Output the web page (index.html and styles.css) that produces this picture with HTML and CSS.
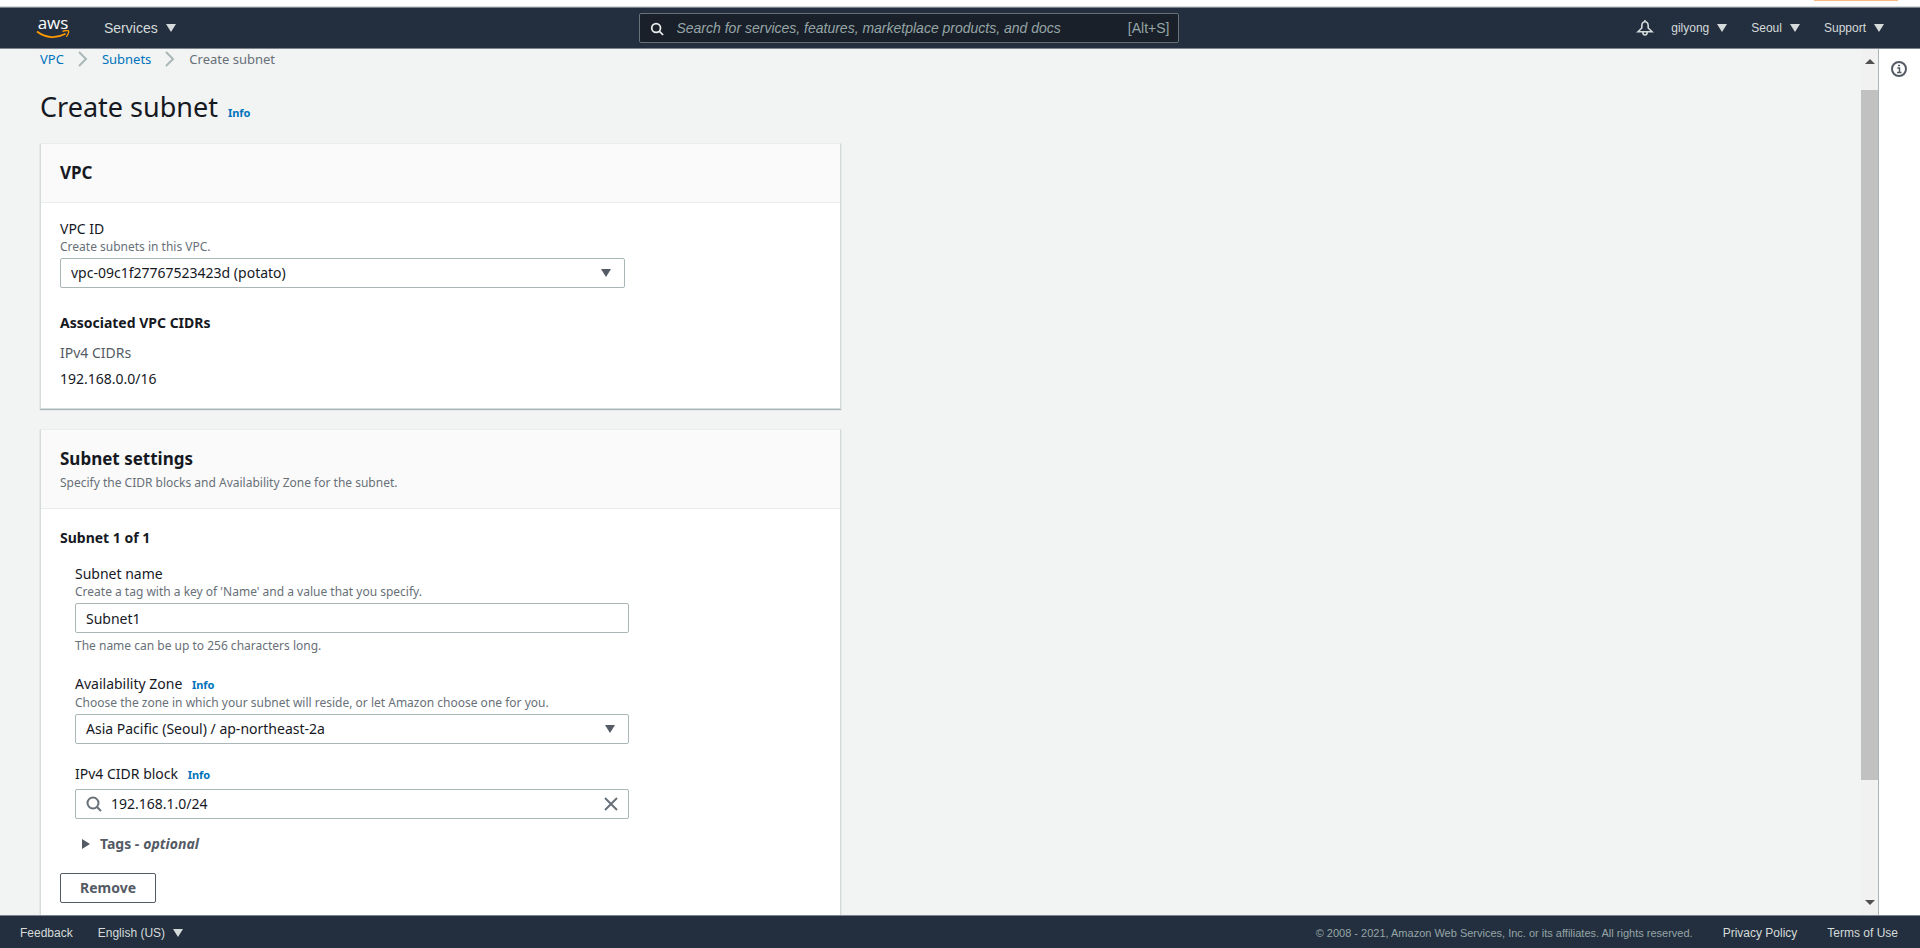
FILE: index.html
```html
<!DOCTYPE html>
<html lang="en">
<head>
    <meta charset="UTF-8">
    <meta name="viewport" content="width=device-width, initial-scale=1.0">
    <title>Create subnet | VPC</title>
    <link rel="stylesheet" href="styles.css">
</head>
<body>
    <div class="top-strip"><span class="tab-mark"></span></div>
    <header class="navbar">
        <a class="logo" href="#" aria-label="aws">
            <span class="logo-text">aws</span>
            <svg class="logo-smile" viewBox="0 0 34 10" width="34" height="10">
                <path d="M1 1.500C10 8.500 21 8.500 29.500 3.800" fill="none" stroke="#f90" stroke-width="1.800"/>
                <path d="M26.500 1.500C29 .4 32 .4 32.600 1C33 2 32 5 30.300 6.800" fill="none" stroke="#f90" stroke-width="1.300"/>
            </svg>
        </a>
        <button class="nav-btn services">Services <span class="caret"></span></button>
        <div class="nav-search">
            <svg viewBox="0 0 16 16" width="14" height="16"><circle cx="7" cy="8" r="5"/><path d="M10.500 11.500L15 16"/></svg>
            <input type="text" aria-label="Search" placeholder="Search for services, features, marketplace products, and docs">
            <span>[Alt+S]</span>
        </div>
        <div class="nav-right">
            <button class="bell" aria-label="Notifications">
                <svg viewBox="0 0 16 16" width="16" height="16"><path d="M8 0V1.500M1 11.700L4.800 8V5.500C5 3 6.500 1.700 8 1.700S11 3 11.200 5.500V8L15 11.700ZM5.800 12C5.800 16 10.200 16 10.200 12"/></svg>
            </button>
            <button class="nav-btn">gilyong <span class="caret"></span></button>
            <button class="nav-btn">Seoul <span class="caret"></span></button>
            <button class="nav-btn">Support <span class="caret"></span></button>
        </div>
    </header>

    <div class="page">
        <main class="content">
            <nav class="breadcrumb">
                <a href="#">VPC</a>
                <svg viewBox="0 0 10 16" width="10" height="16"><path d="M1 1L8 8L1 15"/></svg>
                <a href="#">Subnets</a>
                <svg viewBox="0 0 10 16" width="10" height="16"><path d="M1 1L8 8L1 15"/></svg>
                <span>Create subnet</span>
            </nav>
            <div class="title">
                <h1>Create subnet</h1>
                <a class="info" href="#">Info</a>
            </div>

            <section class="card">
                <div class="card-header">
                    <h2>VPC</h2>
                </div>
                <div class="card-body">
                    <div class="field">
                        <label for="vpcId">VPC ID</label>
                        <p class="hint">Create subnets in this VPC.</p>
                        <div class="select">
                            <select id="vpcId"><option>vpc-09c1f27767523423d (potato)</option></select>
                        </div>
                    </div>
                    <h3>Associated VPC CIDRs</h3>
                    <p class="key">IPv4 CIDRs</p>
                    <p class="value">192.168.0.0/16</p>
                </div>
            </section>

            <section class="card settings">
                <div class="card-header">
                    <h2>Subnet settings</h2>
                    <p class="hint">Specify the CIDR blocks and Availability Zone for the subnet.</p>
                </div>
                <div class="card-body">
                    <h3>Subnet 1 of 1</h3>
                    <div class="subnet">
                        <div class="field">
                            <label for="subnetName">Subnet name</label>
                            <p class="hint">Create a tag with a key of 'Name' and a value that you specify.</p>
                            <input class="text" type="text" id="subnetName" value="Subnet1">
                            <p class="hint below">The name can be up to 256 characters long.</p>
                        </div>
                        <div class="field">
                            <label for="zone">Availability Zone</label>
                            <a class="info" href="#">Info</a>
                            <p class="hint">Choose the zone in which your subnet will reside, or let Amazon choose one for you.</p>
                            <div class="select">
                                <select id="zone"><option>Asia Pacific (Seoul) / ap-northeast-2a</option></select>
                            </div>
                        </div>
                        <div class="field cidr">
                            <label for="cidr">IPv4 CIDR block</label>
                            <a class="info" href="#">Info</a>
                            <div class="search-box">
                                <svg viewBox="0 0 16 16" width="16" height="16"><circle cx="7" cy="7" r="5.500"/><path d="M11 11L15 15"/></svg>
                                <input type="text" id="cidr" value="192.168.1.0/24">
                                <button aria-label="Clear"><svg viewBox="0 0 14 14" width="14" height="14"><path d="M1 1L13 13M13 1L1 13"/></svg></button>
                            </div>
                        </div>
                        <button class="tags"><span class="arrow"></span>Tags - <em>optional</em></button>
                    </div>
                    <button class="remove">Remove</button>
                </div>
            </section>
        </main>
        <div class="scrollbar">
            <span class="up"></span>
            <div class="track"><div class="thumb"></div></div>
            <span class="down"></span>
        </div>
        <aside class="help">
            <button aria-label="Help">
                <svg viewBox="0 0 16 16" width="16" height="16"><circle cx="8" cy="8" r="7"/><path class="i" d="M6.300 7H8.500V11.500M6 11.500H10.500M7 4.500H9"/></svg>
            </button>
        </aside>
    </div>

    <footer class="footer">
        <button class="nav-btn">Feedback</button>
        <button class="nav-btn lang">English (US) <span class="caret"></span></button>
        <span class="copy">© 2008 - 2021, Amazon Web Services, Inc. or its affiliates. All rights reserved.</span>
        <a href="#">Privacy Policy</a>
        <a href="#">Terms of Use</a>
    </footer>
</body>
</html>
```

FILE: styles.css
```css
* { box-sizing: border-box; }
body { margin: 0; height: 100vh; display: flex; flex-direction: column; overflow: hidden; font-family: "Noto Sans", sans-serif; font-size: 14px; line-height: 22px; color: #16191f; background: #f2f3f3; }
h1, h2, h3, p { margin: 0; }
a { color: #0073bb; text-decoration: none; }
button { font: inherit; border: none; background: none; padding: 0; cursor: pointer; }
svg { display: block; fill: none; flex: none; }
input, select { font: inherit; color: inherit; }

/* top bar */
.top-strip { height: 7px; background: #fff; border-bottom: 1px solid #d5dbdb; flex: none; display: flex; justify-content: flex-end; padding-right: 22px; }
.tab-mark { width: 84px; height: 1px; background: #f5b981; }
.navbar { height: 42px; flex: none; display: flex; align-items: center; background: #232f3e; border-top: 1px solid #7d838d; border-bottom: 1px solid #7d838d; padding: 0 36px; font-family: "Liberation Sans", Arial, sans-serif; }
.logo { width: 34px; color: #fff; margin-right: 34px; }
.logo-text { display: block; font: 500 17px/14px "Open Sans", sans-serif; text-align: center; }
.nav-btn { display: flex; align-items: center; gap: 8px; color: #d5dbdb; font-size: 12px; font-family: "Liberation Sans", Arial, sans-serif; }
.services { font-size: 14px; margin-right: 6px; }
.caret { border: 5px solid transparent; border-top: 8px solid #d5dbdb; border-bottom: 0; }
.nav-search { width: 540px; height: 30px; margin: 0 auto; display: flex; align-items: center; gap: 12px; padding: 0 9px 0 10px; background: #1a2029; border: 1px solid #687078; border-radius: 2px; color: #95a5a6; }
.nav-search svg { stroke: #eaeded; stroke-width: 2; overflow: visible; }
.nav-search input { flex: 1; min-width: 0; padding: 0; border: none; background: none; font-style: italic; }
.nav-search input::placeholder { color: #95a5a6; }
.nav-right { display: flex; align-items: center; gap: 24px; }
.bell { margin-right: -6px; }
.bell svg { stroke: #d5dbdb; stroke-width: 1.6; overflow: visible; }

/* page */
.page { flex: 1; min-height: 0; display: flex; }
.content { flex: 1; overflow: hidden; padding: 0 40px; }
.breadcrumb { display: flex; align-items: center; gap: 14px; font-size: 13px; line-height: 20px; color: #687078; }
.breadcrumb svg { stroke: #aab7b8; stroke-width: 2; }
.title { display: flex; align-items: baseline; gap: 10px; margin: 20px 0 18px; }
h1 { font-size: 27px; line-height: 36px; font-weight: 400; }
.info { font-size: 11px; font-weight: 700; margin-left: 6px; }
.title .info { margin-left: 0; }

.card { width: 801px; max-width: 100%; margin-bottom: 20px; background: #fff; border: 1px solid #d5dbdb; border-top-color: #eaeded; box-shadow: 0 1px 1px #aab7b8; }
.card-header { background: #fafafa; border-bottom: 1px solid #eaeded; padding: 17px 19px; }
.card-header .hint { margin-top: 4px; }
.card-body { padding: 16px 19px 18px; }
.settings .card-body { padding-top: 18px; }
h2 { font-size: 17px; line-height: 24px; font-weight: 700; }
h3 { font-size: 14px; line-height: 22px; font-weight: 700; }
.field { width: 565px; max-width: 100%; margin-bottom: 24px; line-height: 20px; }
.hint { font-size: 12px; line-height: 16px; color: #687078; }
.below { padding-top: 5px; }
.key { margin-top: 8px; color: #545b64; }
.value { margin-top: 4px; }
.text, .select select, .search-box { display: block; width: 100%; height: 30px; margin-top: 3px; padding: 0 10px; background: #fff; border: 1px solid #aab7b8; border-radius: 2px; }
.select { position: relative; }
.select select { appearance: none; }
.select::after { content: ""; position: absolute; right: 14px; top: 11px; border: 5px solid transparent; border-top: 8px solid #545b64; border-bottom: 0; }
.subnet { padding: 15px 15px 0; }
.subnet .field { width: 554px; margin-bottom: 20px; }
.subnet .cidr { margin-bottom: 14px; }
.search-box { display: flex; align-items: center; gap: 9px; margin-top: 4px; }
.search-box svg { stroke: #687078; stroke-width: 2; }
.search-box input { flex: 1; min-width: 0; padding: 0; border: none; }
.tags { display: flex; align-items: center; gap: 4px; padding-left: 7px; font-weight: 700; color: #545b64; }
.arrow { border: 5px solid transparent; border-left: 8px solid #545b64; border-right: 0; margin-right: 6px; }
.remove { margin-top: 18px; width: 96px; height: 30px; border: 1px solid #545b64; border-radius: 2px; font-weight: 700; color: #545b64; }

/* scroll bar and help panel */
.scrollbar { width: 17px; display: flex; flex-direction: column; align-items: center; background: #f1f1f1; padding: 10px 0; }
.up, .down { border: 5px solid transparent; }
.up { border-bottom: 5px solid #505050; border-top: 0; }
.down { border-top: 5px solid #505050; border-bottom: 0; }
.track { flex: 1; width: 100%; padding: 26px 0; }
.thumb { height: 88%; background: #c1c1c1; }
.help { width: 42px; background: #fff; border-left: 1px solid #aab7b8; padding: 12px; }
.help svg { stroke: #545b64; stroke-width: 2; }
.help .i { stroke-width: 1.5; }

/* footer */
.footer { height: 33px; flex: none; display: flex; align-items: center; padding: 2px 22px 0 20px; background: #232f3e; border-top: 1px solid #7d838d; font-family: "Liberation Sans", Arial, sans-serif; font-size: 12px; }
.footer a { color: #d5dbdb; margin-left: 30px; }
.lang { margin-left: 25px; }
.copy { margin-left: auto; color: #95a5a6; font-size: 11px; }
```
